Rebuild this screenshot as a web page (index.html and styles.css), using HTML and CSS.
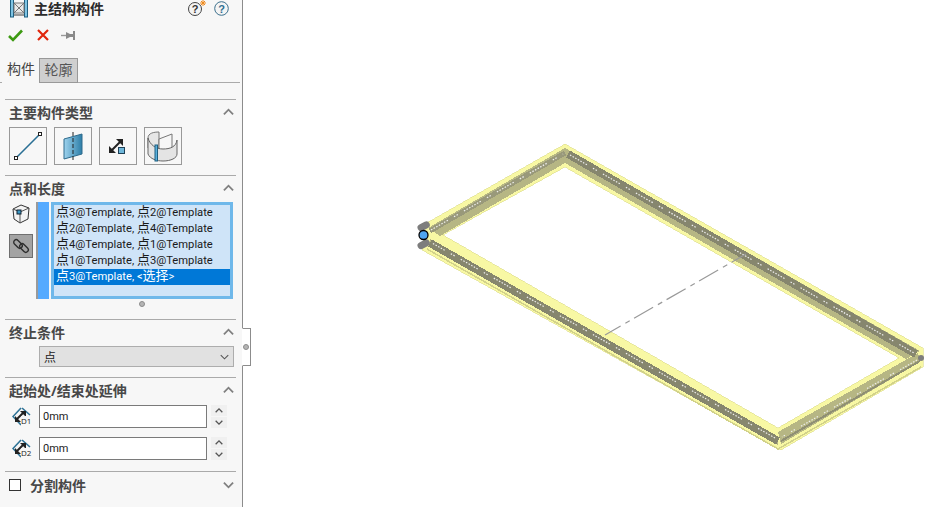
FILE: index.html
```html
<!DOCTYPE html>
<html lang="zh-CN">
<head>
    <meta charset="UTF-8">
    <meta name="viewport" content="width=device-width, initial-scale=1.0">
    <title>主结构构件</title>
    <link rel="stylesheet" href="styles.css">
</head>
<body>
    <svg class="defs" width="0" height="0">
        <symbol id="up" viewBox="0 0 12 8"><polyline points="1,6.5 6,1.5 11,6.5" fill="none" stroke="currentColor" stroke-width="2"/></symbol>
        <symbol id="down" viewBox="0 0 12 8"><polyline points="1,1.5 6,6.5 11,1.5" fill="none" stroke="currentColor" stroke-width="2"/></symbol>
        <symbol id="dim" viewBox="0 0 20 20">
            <polyline points="9,1 1,9.5 9,18" fill="none" stroke="#2f7396" stroke-width="1.6"/>
            <line x1="10" y1="1" x2="18" y2="8" stroke="#2f7396" stroke-width="1.6"/>
            <line x1="4" y1="13" x2="12" y2="5" stroke="#222" stroke-width="2"/>
            <polygon points="3,9 3,15 9,15" fill="#222"/>
            <polygon points="8,4 14,4 14,10" fill="#222"/>
        </symbol>
    </svg>

    <aside class="panel">
        <div class="title-row">
            <svg class="title-icon" width="18" height="18" viewBox="0 0 18 18">
                <rect x="0.5" y="-2" width="3" height="19" fill="#7fc4e4" stroke="#1f5f80"/>
                <rect x="14.5" y="-2" width="3" height="19" fill="#7fc4e4" stroke="#1f5f80"/>
                <path d="M4 3H14V13H4ZM4 3L14 13M14 3L4 13" fill="#e8e8e8" stroke="#777"/>
                <rect x="4" y="14" width="10" height="2" fill="#999"/>
            </svg>
            <h1>主结构构件</h1>
            <div class="help">
                <svg width="20" height="18" viewBox="0 0 20 18">
                    <circle cx="7" cy="9" r="6.5" fill="#f4f4f4" stroke="#444"/>
                    <text x="7" y="13" class="q">?</text>
                    <path d="M15 0V6M12 3H18M13 1L17 5M17 1L13 5" stroke="#f08a1d"/>
                </svg>
                <svg width="15" height="15" viewBox="0 0 15 15">
                    <circle cx="7.5" cy="7.5" r="6.8" fill="#f4f4f4" stroke="#3b6f8c"/>
                    <text x="7.5" y="11.5" class="q q-blue">?</text>
                </svg>
            </div>
        </div>
        <div class="actions">
            <svg width="15" height="13" viewBox="0 0 15 13"><polyline points="1,7 5,11 14,1.5" fill="none" stroke="#3d9a12" stroke-width="2.6"/></svg>
            <svg width="12" height="12" viewBox="0 0 12 12"><path d="M1 1L11 11M11 1L1 11" stroke="#e0260c" stroke-width="2.2"/></svg>
            <svg width="15" height="11" viewBox="0 0 15 11"><path d="M0 5.5H8" stroke="#999" stroke-width="1.4"/><path d="M5 2L9 4H12V1H14V10H12V7H9L5 9Z" fill="#8a8a8a"/></svg>
        </div>
        <div class="tabs">
            <div class="tab active">构件</div>
            <div class="tab">轮廓</div>
        </div>

        <section class="group group-type">
            <div class="group-head"><h2>主要构件类型</h2><svg class="chev"><use href="#up"/></svg></div>
            <div class="type-buttons">
                <button class="type-btn">
                    <svg width="36" height="36" viewBox="0 0 36 36">
                        <line x1="6" y1="30" x2="30" y2="6" stroke="#2a6f94" stroke-width="1.6"/>
                        <rect x="4.5" y="28.5" width="3" height="3" fill="#fff" stroke="#222"/>
                        <rect x="28.5" y="4.5" width="3" height="3" fill="#fff" stroke="#222"/>
                    </svg>
                </button>
                <button class="type-btn">
                    <svg width="36" height="36" viewBox="0 0 36 36">
                        <defs><linearGradient id="plane" x1="0" x2="1"><stop offset="0" stop-color="#9ed3ee"/><stop offset="1" stop-color="#2d7ea8"/></linearGradient></defs>
                        <polygon points="9,11 27,6 27,26 9,31" fill="url(#plane)" stroke="#2f6b8c"/>
                        <line x1="18" y1="4" x2="18" y2="33" stroke="#222" stroke-dasharray="4 2"/>
                    </svg>
                </button>
                <button class="type-btn">
                    <svg width="36" height="36" viewBox="0 0 36 36">
                        <line x1="11" y1="23" x2="21" y2="13" stroke="#222" stroke-width="2"/>
                        <polygon points="9,18 9,25 16,25" fill="#222"/>
                        <polygon points="16,11 23,11 23,18" fill="#222"/>
                        <rect x="18.5" y="19.5" width="6" height="6" fill="#6fb7da" stroke="#1f3f55"/>
                    </svg>
                </button>
                <button class="type-btn">
                    <svg width="36" height="36" viewBox="0 0 36 36">
                        <path d="M3 10C3 5 9 4 14 4V20L3 20Z" fill="#e6e6e6" stroke="#777"/>
                        <path d="M14 11L27 6V22L14 26Z" fill="#f6f6f6" stroke="#777"/>
                        <path d="M3 10V26C5 31 12 33 18 33C26 33 32 30 32 26V12C31 19 25 21 18 21C11 21 5 17 3 10Z" fill="#e4e4e4" stroke="#666"/>
                        <rect x="10" y="17" width="2.5" height="16" fill="#5ab0dc" stroke="#1f5f80"/>
                    </svg>
                </button>
            </div>
        </section>

        <section class="group group-points">
            <div class="group-head"><h2>点和长度</h2><svg class="chev"><use href="#up"/></svg></div>
            <div class="points-body">
                <div class="side-tools">
                    <svg class="cube" width="18" height="20" viewBox="0 0 18 20">
                        <polygon points="9,1 17,4 16,15 8,19 2,15 1,5" fill="#f4f4f4" stroke="#333"/>
                        <path d="M1 5L8 8L17 4M8 8V19" fill="none" stroke="#555"/>
                        <rect x="5" y="6" width="4" height="4" fill="#3c98c4" stroke="#123"/>
                    </svg>
                    <button class="link-btn">
                        <svg width="18" height="18" viewBox="0 0 18 18" fill="none" stroke="#2e2e2e" stroke-width="1.4">
                            <rect x="1" y="4.5" width="10" height="5" rx="2.5" transform="rotate(45 6 7)"/>
                            <rect x="7" y="8.5" width="10" height="5" rx="2.5" transform="rotate(45 12 11)"/>
                        </svg>
                    </button>
                </div>
                <div class="blue-bar"></div>
                <ul class="point-list">
                    <li><span class="zh">点</span>3@Template, <span class="zh">点</span>2@Template</li>
                    <li><span class="zh">点</span>2@Template, <span class="zh">点</span>4@Template</li>
                    <li><span class="zh">点</span>4@Template, <span class="zh">点</span>1@Template</li>
                    <li><span class="zh">点</span>1@Template, <span class="zh">点</span>3@Template</li>
                    <li class="selected"><span class="zh">点</span>3@Template, &lt;<span class="zh">选择</span>&gt;</li>
                </ul>
            </div>
            <div class="resize-dot"></div>
        </section>

        <section class="group group-end">
            <div class="group-head short"><h2>终止条件</h2><svg class="chev"><use href="#up"/></svg></div>
            <div class="combo"><span>点</span><svg class="combo-arrow" width="9" height="6" viewBox="0 0 12 8"><polyline points="1,1.5 6,6.5 11,1.5" fill="none" stroke="#555" stroke-width="1.4"/></svg></div>
        </section>

        <section class="group group-extend">
            <div class="group-head short"><h2>起始处/结束处延伸</h2><svg class="chev"><use href="#up"/></svg></div>
            <div class="dim-row">
                <div class="dim-icon"><svg width="20" height="20"><use href="#dim"/></svg><span>D1</span></div>
                <input class="dim-input" type="text" value="0mm">
                <div class="spin"><svg><use href="#up"/></svg><svg><use href="#down"/></svg></div>
            </div>
            <div class="dim-row">
                <div class="dim-icon"><svg width="20" height="20"><use href="#dim"/></svg><span>D2</span></div>
                <input class="dim-input" type="text" value="0mm">
                <div class="spin"><svg><use href="#up"/></svg><svg><use href="#down"/></svg></div>
            </div>
        </section>

        <section class="group group-split">
            <div class="split-head">
                <input class="check" type="checkbox">
                <h2>分割构件</h2>
                <svg class="chev"><use href="#down"/></svg>
            </div>
        </section>

        <div class="panel-handle"><i></i></div>
    </aside>

    <main class="viewport">
        <svg class="model" width="699" height="507" viewBox="243 0 699 507">
            <!-- yellow envelope of the frame -->
            <path class="shell" fill-rule="evenodd" d="M425 224L565 144L923 348L923 367L781 450L422 250ZM443 235L778 428L899 358L565 167Z"/>

            <!-- olive faces, one per beam -->
            <polygon class="face" points="428,228 565,148 565,163 440,236"/>
            <polygon class="face" points="565,148 920,351 906,359 565,163"/>
            <polygon class="face" points="778,432 918,353 920,362 781,444"/>
            <polygon class="face" points="430,239 778,437 778,445 430,247"/>

            <path class="lip" d="M427 249L778 449L921 367"/>
            <path class="core core-light" d="M430 231L565 153"/>
            <path class="core core-dark" d="M568 154L916 354"/>
            <path class="core core-dark" d="M430 243L778 441"/>
            <path class="core core-thin" d="M781 441L920 361"/>

            <path class="dots" d="M431 230L563 154"/>
            <path class="dots" d="M570 155L914 353"/>
            <path class="dots" d="M917 360L782 437"/>
            <path class="dots" d="M775 438L432 243"/>

            <line class="center-line" x1="605" y1="335" x2="746" y2="254"/>

            <rect class="end-cap" x="417" y="223" width="13" height="7" rx="3.5" transform="rotate(-28 423 226)"/>
            <rect class="end-cap" x="417" y="241" width="13" height="7" rx="3.5" transform="rotate(-28 423 244)"/>
            <circle class="end-cap" cx="921" cy="358" r="3"/>
            <circle class="pick" cx="423.5" cy="235" r="4.5"/>
        </svg>
    </main>
</body>
</html>
```

FILE: styles.css
```css
*{
    margin: 0;
    padding: 0;
    box-sizing: border-box;
    font-family: "Open Sans", "Noto Sans CJK SC", sans-serif;
}
html, body{
    height: 100%;
    overflow: hidden;
}
body{
    display: flex;
    background: #fff;
    color: #222;
    font-size: 12px;
}
.defs{
    position: absolute;
}
.panel{
    position: relative;
    flex: none;
    width: 243px;
    height: 507px;
    background: #f7f7f7;
    border-right: 1px solid #8c8c8c;
    display: flex;
    flex-direction: column;
}
.viewport{
    flex: 1;
}
.model{
    display: block;
}

/* header */
.title-row{
    height: 17px;
    display: flex;
    align-items: center;
    padding-left: 10px;
}
.title-icon{
    margin-right: 6px;
}
.title-row h1{
    font-size: 14px;
    font-weight: 700;
    line-height: 17px;
    color: #2b2b2b;
}
.help{
    margin-left: auto;
    margin-right: 13px;
    display: flex;
    align-items: center;
    gap: 6px;
}
.q{
    font-family: "Liberation Sans", sans-serif;
    font-size: 11px;
    font-weight: 700;
    text-anchor: middle;
    fill: #333;
}
.q-blue{
    fill: #2f6f92;
}
.actions{
    height: 36px;
    display: flex;
    align-items: center;
    padding-left: 8px;
}
.actions svg:nth-child(2){
    margin-left: 14px;
}
.actions svg:nth-child(3){
    margin-left: 12px;
}
.tabs{
    height: 30px;
    padding: 5px 0 0 2px;
    display: flex;
    border-bottom: 1px solid #aaa;
    margin-right: 2px;
}
.tab{
    width: 39px;
    height: 25px;
    text-align: center;
    font-size: 14px;
    line-height: 22px;
    color: #555;
    background: #cfcfcf;
    border: 1px solid #999;
    margin-bottom: -1px;
}
.tab.active{
    width: 37px;
    padding-left: 1px;
    background: #f7f7f7;
    border: 0;
    color: #444;
}

/* groups */
.group{
    position: relative;
    margin: 0 6px 0 5px;
    border-top: 1px solid #aaa;
}
.group-type{
    margin-top: 16px;
    height: 76px;
}
.group-points{
    height: 144px;
}
.group-end{
    height: 58px;
}
.group-extend{
    height: 94px;
}
.group-head{
    height: 27px;
    display: flex;
    align-items: center;
    padding: 0 2px 3px 4px;
    justify-content: space-between;
}
.group-head.short{
    height: 25px;
    padding-bottom: 2px;
}
h2{
    font-size: 14px;
    font-weight: 700;
    color: #484848;
}
.chev{
    width: 11px;
    height: 8px;
    color: #808080;
}
.type-buttons{
    display: flex;
    gap: 7px;
    padding-left: 4px;
}
.type-btn{
    width: 38px;
    height: 38px;
    border: 1px solid #999;
    background: #f7f7f7;
    display: flex;
    align-items: center;
    justify-content: center;
}
.points-body{
    display: flex;
    height: 98px;
    margin-top: -1px;
}
.side-tools{
    width: 24px;
    margin-left: 4px;
    display: flex;
    flex-direction: column;
    align-items: center;
}
.cube{
    margin-top: 2px;
    margin-bottom: 10px;
}
.link-btn{
    width: 24px;
    height: 24px;
    background: #a3a3a3;
    border: 1px solid #6f6f6f;
    display: flex;
    align-items: center;
    justify-content: center;
}
.blue-bar{
    width: 13px;
    margin: 0 2px 1px 3px;
    background: #55aaff;
    border-left: 2px solid #9a9a9a;
}
.point-list{
    width: 182px;
    height: 97px;
    list-style: none;
    background: #cfe4f8;
    border: 3px solid #6fb8ea;
}
.point-list li{
    height: 16px;
    line-height: 16px;
    padding-left: 2px;
    font-family: Roboto, "Noto Sans CJK SC", sans-serif;
    font-size: 11.2px;
    color: #1a1a1a;
    white-space: nowrap;
}
.point-list .zh{
    font-family: Roboto, "Noto Sans CJK SC", sans-serif;
    font-size: 13px;
    line-height: 14px;
}
.point-list .selected{
    background: #0078d7;
    color: #fff;
}
.resize-dot{
    width: 6px;
    height: 6px;
    border-radius: 50%;
    background: #b5b5b5;
    border: 1px solid #8c8c8c;
    margin: 1px 0 0 134px;
}
.combo{
    height: 21px;
    margin: 1px 2px 0 34px;
    background: #e1e1e1;
    border: 1px solid #adadad;
    display: flex;
    align-items: center;
    justify-content: space-between;
    padding: 0 4px 0 4px;
    font-size: 12px;
}
.dim-row{
    height: 23px;
    display: flex;
    align-items: center;
    margin-top: 2px;
    margin-bottom: 9px;
}
.dim-icon{
    position: relative;
    width: 34px;
    padding-left: 7px;
    height: 20px;
}
.dim-icon span{
    position: absolute;
    left: 16px;
    top: 9px;
    font-size: 8px;
    line-height: 9px;
    background: #f7f7f7;
    color: #222;
}
.dim-input{
    width: 168px;
    height: 23px;
    border: 1px solid #7a7a7a;
    background: #fff;
    padding-left: 3px;
    font-family: Roboto, sans-serif;
    font-size: 11px;
    color: #222;
    outline: 0;
}
.spin{
    width: 16px;
    height: 23px;
    margin-left: 4px;
    display: flex;
    flex-direction: column;
    gap: 1px;
    color: #555;
}
.spin svg{
    width: 16px;
    height: 11px;
    padding: 2px 4px;
    background: #f0f0f0;
}
.split-head{
    display: flex;
    align-items: center;
    height: 26px;
    padding: 0 2px 0 4px;
}
.check{
    appearance: none;
    width: 12px;
    height: 12px;
    background: #fff;
    border: 1px solid #333;
    margin-right: 9px;
}
.split-head .chev{
    margin-left: auto;
}
.panel-handle{
    position: absolute;
    left: 242px;
    top: 328px;
    width: 9px;
    height: 38px;
    background: #fff;
    border: 1px solid #8c8c8c;
    border-left: 1px solid #fff;
}
.panel-handle i{
    display: block;
    width: 6px;
    height: 6px;
    margin-top: 15px;
    border-radius: 50%;
    background: #b5b5b5;
    border: 1px solid #8c8c8c;
}

/* model */
.shell{
    fill: #f8f8a4;
    stroke: #dcdc8c;
    stroke-width: 0.6;
    shape-rendering: crispEdges;
}
.face{
    fill: #b6b684;
    shape-rendering: crispEdges;
}
.lip{
    fill: none;
    stroke: #d2d28a;
    stroke-width: 1.5;
    shape-rendering: crispEdges;
}
.core{
    fill: none;
    shape-rendering: crispEdges;
}
.core-light{
    stroke: #99997a;
    stroke-width: 5;
}
.core-dark{
    stroke: #86866e;
    stroke-width: 8;
}
.core-thin{
    stroke: #8f8f74;
    stroke-width: 2;
}
.dots{
    fill: none;
    stroke: #f0f0f0;
    stroke-width: 1.2;
    stroke-dasharray: 1.5 1.5 1.5 1.5 1.5 1.5 1.5 1.5 1.5 1.5 1.5 1.5 1.5 7 1.5 1.5 1.5 7;
}
.center-line{
    stroke: #999;
    stroke-width: 1.2;
    stroke-dasharray: 22 5.5 5 5;
    stroke-dashoffset: 4;
}
.end-cap{
    fill: #7d7d7d;
}
.pick{
    fill: #4fa6ef;
    stroke: #000;
    stroke-width: 1.3;
}
```
